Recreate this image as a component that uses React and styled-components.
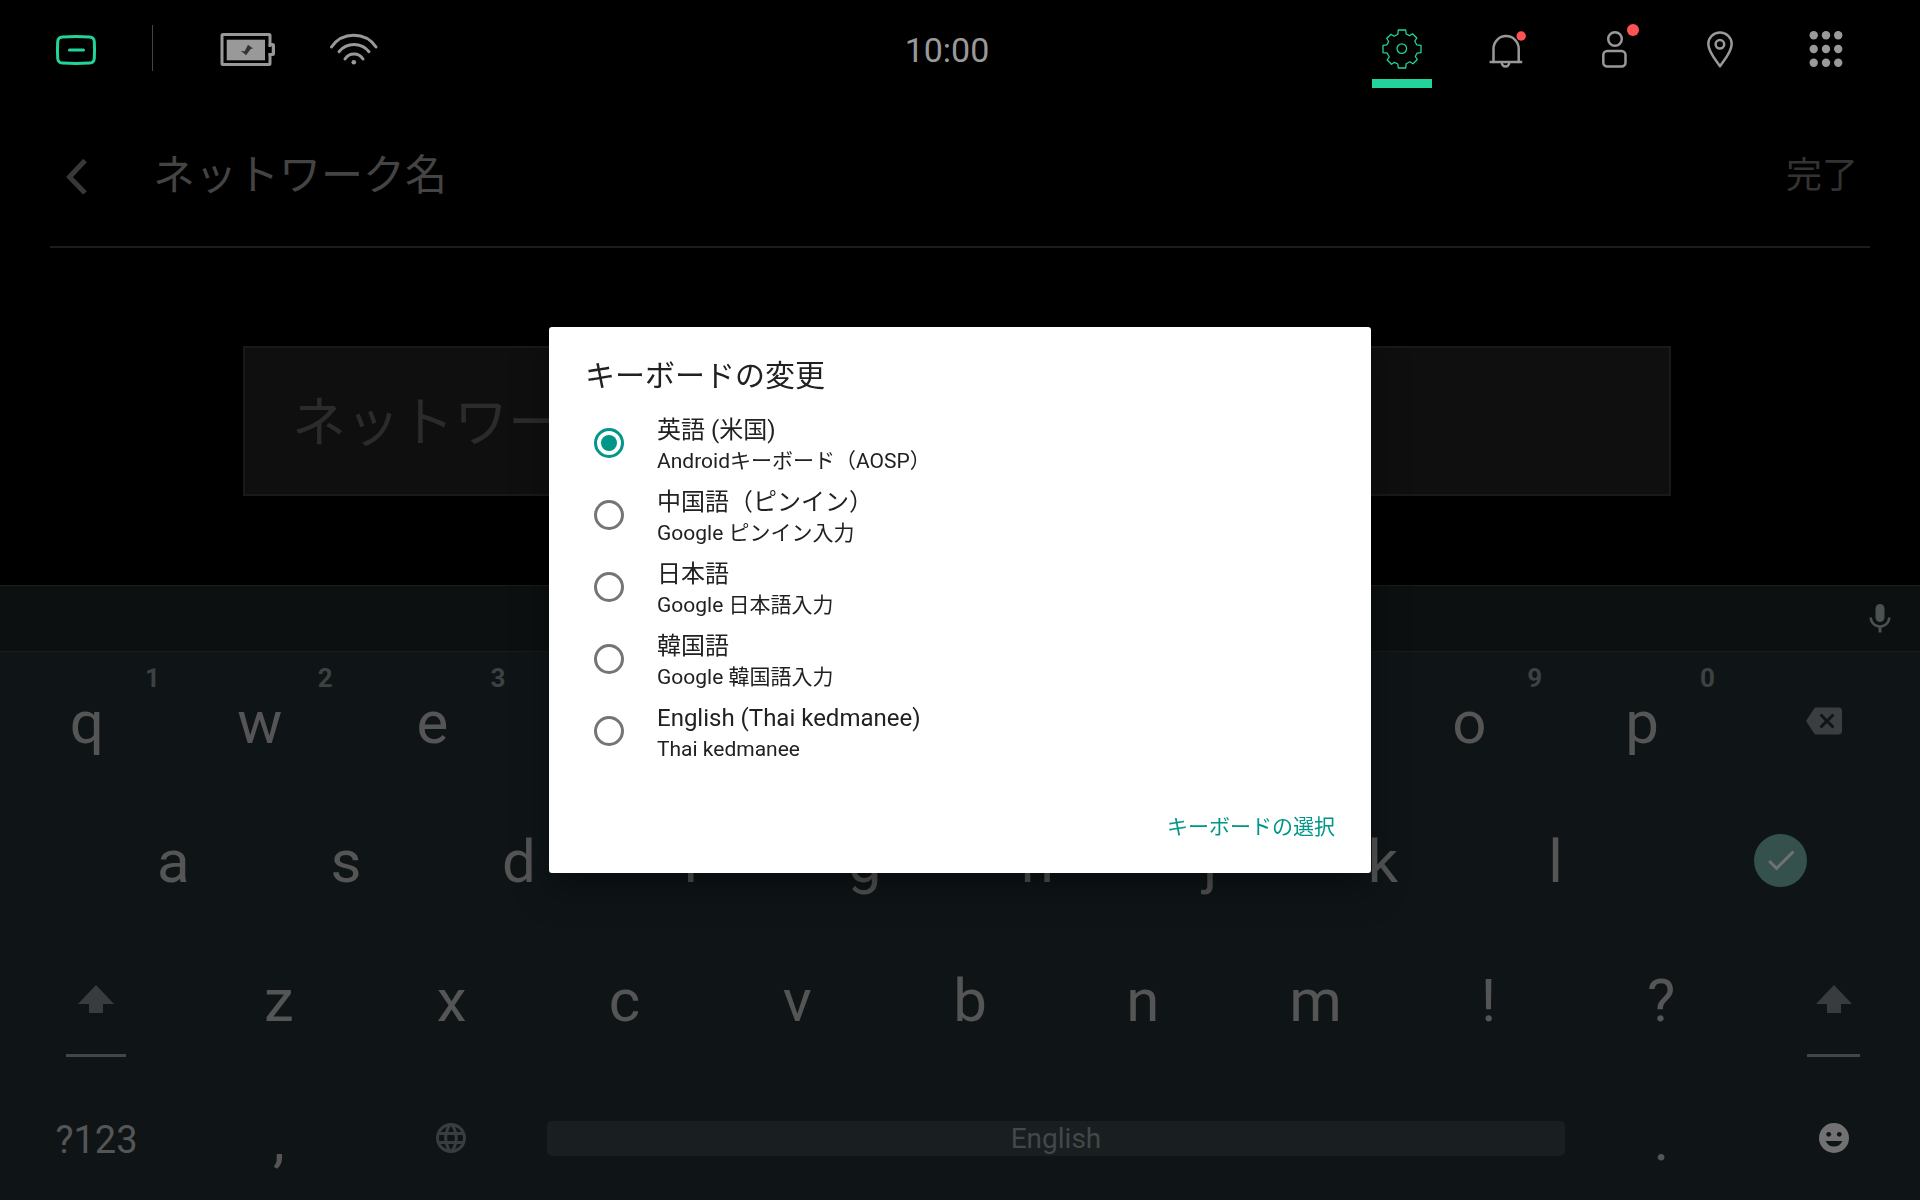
import React, { useState } from "react";
import styled, { createGlobalStyle, css } from "styled-components";
import { MdBackspace, MdCheck, MdLanguage, MdMic } from "react-icons/md";

const accent = "#22d39c";
const teal = "#009688";

const GlobalStyle = createGlobalStyle`
  * { box-sizing: border-box; }
  body {
    margin: 0;
    background: #000;
    font-family: Roboto, "Noto Sans CJK JP", sans-serif;
  }
  button, input { font: inherit; }
  button {
    margin: 0;
    padding: 0;
    border: 0;
    background: none;
    color: inherit;
    cursor: pointer;
  }
  svg { display: block; }
`;

const Screen = styled.div`
  display: flex;
  flex-direction: column;
  min-height: 100vh;
`;

/* ---------- status bar ---------- */

const StatusBar = styled.header`
  display: grid;
  grid-template-columns: 1fr auto 1fr;
  align-items: center;
  height: 96px;
  padding: 0 41px 0 15px;
  color: #999;
`;

const StatusGroup = styled.nav`
  display: flex;
  align-items: center;
  justify-content: ${(p) => (p.$end ? "flex-end" : "flex-start")};
  padding-left: 8px;
`;

const statusCell = css`
  position: relative;
  display: grid;
  place-items: center;
  width: 106px;
  height: 96px;
`;

const StatusIcon = styled.span`
  ${statusCell}
`;

const StatusButton = styled.button`
  ${statusCell}
  color: ${(p) => (p.$accent ? accent : "#999")};
  ${(p) =>
    p.$active &&
    css`
      &::after {
        content: "";
        position: absolute;
        bottom: 8px;
        width: 60px;
        height: 9px;
        background: ${accent};
      }
    `}
`;

const Divider = styled.span`
  width: 1px;
  height: 46px;
  margin: 0 42px 0 23px;
  background: #444;
`;

const Clock = styled.time`
  padding-top: 4px;
  font-size: 34px;
  line-height: 40px;
`;

const Glyph = ({ children, weight = 3 }) => (
  <svg
    width="64"
    height="64"
    viewBox="0 0 64 64"
    fill="none"
    stroke="currentColor"
    strokeWidth={weight}
    strokeLinecap="round"
    strokeLinejoin="round"
    aria-hidden="true"
  >
    {children}
  </svg>
);

const HomeGlyph = () => (
  <Glyph>
    <path d="M18.5 20.9q13.500-.8 27 0 4.500.2 4.800 4.600.5 8.500 0 17-.3 4.400-4.800 4.600-13.500.8-27 0-4.500-.2-4.800-4.600-.5-8.500 0-17 .3-4.400 4.800-4.600z" />
    <path d="M25.500 34h14" />
  </Glyph>
);

const BatteryGlyph = () => (
  <Glyph>
    <rect x="6" y="18.500" width="48" height="30" rx="1" />
    <rect x="10.700" y="23.700" width="38.300" height="20.600" fill="currentColor" stroke="none" />
    <path d="M54 28.500h2.500q1 0 1 1v8q0 1-1 1H54" />
    <path d="M52 31h3.500v6H52z" fill="#000" stroke="none" />
    <path d="M32 28.700 35.300 31.300 37.300 32.300 34.700 33 30 39.300 27.300 36.700 24.700 35 28.700 35.300z" fill="#333" stroke="none" />
  </Glyph>
);

const WifiGlyph = () => (
  <Glyph>
    <path d="M9.500 31a27 27 0 0 1 44.500 0" />
    <path d="M17 35.700a19.200 19.200 0 0 1 30 0" />
    <path d="M23 43a10.600 10.600 0 0 1 18 0" />
    <circle cx="31.800" cy="46.300" r="2.300" fill="currentColor" stroke="none" />
  </Glyph>
);

const gearQuadrant = [
  [-3.7, -19], [3.7, -19], [4.2, -15], [7.5, -13.3],
  [10.5, -15.3], [14.8, -11], [12.8, -7.8], [14.7, -4.2],
];
const gearPoints = [0, 1, 2, 3]
  .flatMap((turn) =>
    gearQuadrant.map(([x, y]) => {
      let p = [x, y];
      for (let i = 0; i < turn; i += 1) p = [-p[1], p[0]];
      return `${32 + p[0]},${33 + p[1]}`;
    })
  )
  .join(" ");

const GearGlyph = () => (
  <Glyph weight={1.3}>
    <polygon points={gearPoints} />
    <circle cx="31.800" cy="32.600" r="4.800" />
  </Glyph>
);

const BellGlyph = () => (
  <Glyph weight={2.5}>
    <path d="M17.500 46V32.700a12.600 12.600 0 0 1 25.200 0V46" />
    <path d="M14.800 46h30.200" strokeLinecap="square" />
    <path d="M25.800 46.500a3.700 4 0 0 0 7.400 0" />
    <circle cx="45.200" cy="20" r="4.700" fill="#ff5252" stroke="none" />
  </Glyph>
);

const PersonGlyph = () => (
  <Glyph weight={2.5}>
    <circle cx="33" cy="23" r="6.800" />
    <rect x="21.300" y="35" width="22.200" height="15.600" rx="4" />
    <circle cx="51" cy="14" r="6" fill="#ff5252" stroke="none" />
  </Glyph>
);

const PinGlyph = () => (
  <Glyph weight={2.5}>
    <path d="M32 50.200C28.500 45 20.300 36.500 20.300 27.800a11.700 11.300 0 0 1 23.400 0C43.700 36.500 35.500 45 32 50.200z" />
    <circle cx="31.900" cy="28.300" r="4.300" />
  </Glyph>
);

const AppsGlyph = () => (
  <Glyph>
    {[19.3, 33, 46.7].flatMap((cy) =>
      [19.7, 32, 44.2].map((cx) => (
        <circle key={`${cx}-${cy}`} cx={cx} cy={cy} r="4.200" fill="currentColor" stroke="none" />
      ))
    )}
  </Glyph>
);

/* ---------- page ---------- */

const PageHeader = styled.div`
  display: flex;
  align-items: center;
  height: 152px;
  margin: 0 50px;
  padding: 10px 12px 0 16px;
  border-bottom: 2px solid #1c1c1c;
`;

const BackButton = styled.button`
  width: 24px;
  height: 36px;
  color: #383838;
`;

const PageTitle = styled.h1`
  flex: 1;
  margin: 0 0 0 63px;
  color: #444;
  font-size: 42px;
  font-weight: 400;
  line-height: 48px;
`;

const DoneButton = styled.button`
  color: #333;
  font-size: 36px;
  line-height: 48px;
`;

const Main = styled.main`
  flex: 1;
  padding: 98px 249px 89px 243px;
`;

const NameInput = styled.input`
  display: block;
  width: 100%;
  height: 150px;
  padding: 4px 47px 0;
  border: 2px solid #191919;
  border-radius: 0;
  outline: 0;
  background: #0f0f0f;
  color: #999;
  font-size: 54px;
  &::placeholder {
    color: #2b2b2b;
    opacity: 1;
  }
`;

/* ---------- keyboard ---------- */

const Keyboard = styled.section`
  background: #0f1517;
  color: #555;
`;

const SuggestionStrip = styled.div`
  display: flex;
  align-items: center;
  justify-content: flex-end;
  height: 67px;
  padding-right: 22px;
  border-top: 1px solid #1c1c1c;
  border-bottom: 1px solid #171c1e;
  background: #0c1011;
  color: #4b5051;
`;

const KeyRows = styled.div`
  display: grid;
  gap: 17px;
  padding: 8px 0 1px;
`;

const KeyRow = styled.div`
  display: flex;
  height: 122px;
  ${(p) =>
    p.$inset &&
    css`
      &::before {
        content: "";
        flex: 0 0 4.5%;
      }
    `}
`;

const Key = styled.button`
  position: relative;
  display: grid;
  place-items: center;
  flex: ${(p) => (p.$share ? `0 0 ${p.$share}%` : "1 1 0")};
  font-size: 60px;
  color: ${(p) => p.$tone || "#555"};
`;

const LetterKey = styled(Key)`
  flex: 0 0 9%;
  padding: 2px 0 0 1px;
`;

const SymbolsKey = styled(Key)`
  padding: 4px 0 0 1px;
  font-size: 38px;
`;

const Hint = styled.span`
  position: absolute;
  top: 5px;
  right: 13px;
  color: #3d4142;
  font-size: 26px;
  font-weight: 700;
  line-height: 26px;
`;

const ShiftKey = styled(Key)`
  color: #383c3f;
  &::after {
    content: "";
    position: absolute;
    bottom: 3px;
    width: 31%;
    height: 3px;
    background: #444546;
  }
`;

const EnterDisc = styled.span`
  display: grid;
  place-items: center;
  width: 53px;
  height: 53px;
  border-radius: 50%;
  background: #34514e;
  color: #717171;
`;

const SpaceKey = styled.button`
  flex: 1;
  align-self: center;
  height: 35px;
  margin: 0 9px;
  border-radius: 5px;
  background: #191e20;
  color: #434849;
  font-size: 28px;
  line-height: 35px;
`;

const ShiftArrow = () => (
  <svg width="36" height="28" viewBox="0 0 36 28" fill="currentColor" aria-hidden="true">
    <path d="M18 0 36 19H25v9H11v-9H0z" />
  </svg>
);

const Smiley = () => (
  <svg width="30" height="30" viewBox="0 0 30 30" aria-hidden="true">
    <circle cx="15" cy="15" r="15" fill="currentColor" />
    <g fill="#0f1517">
      <circle cx="9.700" cy="11.300" r="2.400" />
      <circle cx="20.300" cy="11.300" r="2.400" />
      <path d="M6.700 18h16.600a9 9 0 0 1-16.600 0z" />
    </g>
  </svg>
);

/* ---------- dialog ---------- */

const Overlay = styled.div`
  position: fixed;
  inset: 0;
  display: grid;
  place-items: center;
`;

const Dialog = styled.form`
  width: 822px;
  max-width: 100%;
  border-radius: 3px;
  background: #fff;
  color: #212121;
  box-shadow: 0 16px 36px rgba(0, 0, 0, 0.4);
`;

const DialogTitle = styled.h2`
  margin: 0;
  padding: 31px 36px 13px;
  font-size: 30px;
  font-weight: 400;
  line-height: 36px;
`;

const Option = styled.label`
  display: flex;
  align-items: center;
  height: 72px;
  padding: 0 45px;
  cursor: pointer;
`;

const Radio = styled.input`
  appearance: none;
  display: grid;
  place-items: center;
  flex: none;
  width: 30px;
  height: 30px;
  margin: 0 33px 0 0;
  border: 3px solid #757575;
  border-radius: 50%;
  &:checked {
    border-color: ${teal};
  }
  &:checked::before {
    content: "";
    width: 16px;
    height: 16px;
    border-radius: 50%;
    background: ${teal};
  }
`;

const OptionText = styled.span`
  display: grid;
  padding: 8px 0 1px;
`;

const OptionName = styled.span`
  font-size: 24px;
  line-height: 30px;
`;

const OptionDetail = styled.span`
  font-size: 21px;
  line-height: 33px;
`;

const DialogActions = styled.div`
  display: flex;
  justify-content: flex-end;
  padding: 42px 36px 28px;
`;

const DialogAction = styled.button`
  color: ${teal};
  font-size: 21px;
  line-height: 36px;
`;

/* ---------- data ---------- */

const topRow = [..."qwertyuiop"].map((letter, i) => ({ letter, hint: (i + 1) % 10 }));
const homeRow = [..."asdfghjkl"];
const lowerRow = [..."zxcvbnm!?"];

const keyboards = [
  { id: "en", name: "英語 (米国)", detail: "Androidキーボード（AOSP）" },
  { id: "zh", name: "中国語（ピンイン）", detail: "Google ピンイン入力" },
  { id: "ja", name: "日本語", detail: "Google 日本語入力" },
  { id: "ko", name: "韓国語", detail: "Google 韓国語入力" },
  { id: "th", name: "English (Thai kedmanee)", detail: "Thai kedmanee" },
];

export default function App() {
  const [selected, setSelected] = useState("en");

  return (
    <>
      <GlobalStyle />
      <Screen lang="ja">
        <StatusBar>
          <StatusGroup>
            <StatusButton type="button" $accent aria-label="ホーム"><HomeGlyph /></StatusButton>
            <Divider />
            <StatusIcon><BatteryGlyph /></StatusIcon>
            <StatusIcon><WifiGlyph /></StatusIcon>
          </StatusGroup>
          <Clock>10:00</Clock>
          <StatusGroup $end>
            <StatusButton type="button" $accent $active aria-label="設定"><GearGlyph /></StatusButton>
            <StatusButton type="button" aria-label="通知"><BellGlyph /></StatusButton>
            <StatusButton type="button" aria-label="プロフィール"><PersonGlyph /></StatusButton>
            <StatusButton type="button" aria-label="位置情報"><PinGlyph /></StatusButton>
            <StatusButton type="button" aria-label="アプリ"><AppsGlyph /></StatusButton>
          </StatusGroup>
        </StatusBar>

        <PageHeader>
          <BackButton type="button" aria-label="戻る">
            <svg width="24" height="36" viewBox="0 0 24 36" fill="none" stroke="currentColor" strokeWidth="5" aria-hidden="true">
              <path d="M19 2.500 3.500 19 19 35" />
            </svg>
          </BackButton>
          <PageTitle>ネットワーク名</PageTitle>
          <DoneButton type="button">完了</DoneButton>
        </PageHeader>

        <Main>
          <NameInput type="text" placeholder="ネットワーク名" aria-label="ネットワーク名" />
        </Main>

        <Keyboard aria-label="キーボード">
          <SuggestionStrip>
            <button type="button" aria-label="音声入力"><MdMic size={36} /></button>
          </SuggestionStrip>
          <KeyRows>
            <KeyRow>
              {topRow.map(({ letter, hint }) => (
                <LetterKey type="button" key={letter}>
                  {letter}
                  <Hint>{hint}</Hint>
                </LetterKey>
              ))}
              <Key type="button" $tone="#3a3e41" aria-label="削除"><MdBackspace size={36} /></Key>
            </KeyRow>
            <KeyRow $inset>
              {homeRow.map((letter) => (
                <LetterKey type="button" key={letter}>{letter}</LetterKey>
              ))}
              <Key type="button" aria-label="確定">
                <EnterDisc><MdCheck size={36} /></EnterDisc>
              </Key>
            </KeyRow>
            <KeyRow>
              <ShiftKey type="button" $share={10} aria-label="シフト"><ShiftArrow /></ShiftKey>
              {lowerRow.map((letter) => (
                <LetterKey type="button" key={letter}>{letter}</LetterKey>
              ))}
              <ShiftKey type="button" aria-label="シフト"><ShiftArrow /></ShiftKey>
            </KeyRow>
            <KeyRow>
              <SymbolsKey type="button" $share={10}>?123</SymbolsKey>
              <LetterKey type="button">,</LetterKey>
              <Key type="button" $share={9} $tone="#383d40" aria-label="言語"><MdLanguage size={36} /></Key>
              <SpaceKey type="button">English</SpaceKey>
              <LetterKey type="button">.</LetterKey>
              <Key type="button" $share={9} $tone="#717171" aria-label="絵文字"><Smiley /></Key>
            </KeyRow>
          </KeyRows>
        </Keyboard>
      </Screen>

      <Overlay lang="ja">
        <Dialog role="dialog" aria-labelledby="dialog-title">
          <DialogTitle id="dialog-title">キーボードの変更</DialogTitle>
          <div role="radiogroup" aria-labelledby="dialog-title">
            {keyboards.map(({ id, name, detail }) => (
              <Option key={id}>
                <Radio
                  type="radio"
                  name="keyboard"
                  value={id}
                  checked={selected === id}
                  onChange={() => setSelected(id)}
                />
                <OptionText>
                  <OptionName>{name}</OptionName>
                  <OptionDetail>{detail}</OptionDetail>
                </OptionText>
              </Option>
            ))}
          </div>
          <DialogActions>
            <DialogAction type="button">キーボードの選択</DialogAction>
          </DialogActions>
        </Dialog>
      </Overlay>
    </>
  );
}
